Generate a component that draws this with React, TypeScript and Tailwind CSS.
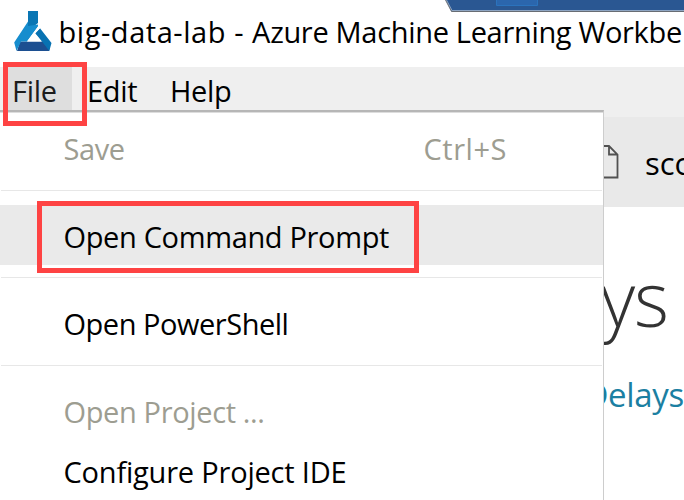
import type { ReactNode } from 'react';

function Logo() {
  return (
    <svg className="ml-[14px] mt-[10px] h-[42px] w-[38px] shrink-0" viewBox="14 10 38 42">
      <path d="M28 11h10v12l-5 4-5-1z" fill="#0a76b4" />
      <path d="M20 41.500h26l4 5-1 4.500H17z" fill="#1c4f91" />
      <path d="M28 21.500V26l10-1.500v2L27 41.500h-6L16.500 51l-2.300-8.500z" fill="#168dce" />
      <path d="M35 33l5-4.800L51.500 43l-2.200 8-7.300-9.500z" fill="#0872b2" />
      <path d="M27 41.500L38 26.500l2 1.700-5 5.500 6.500 7.800z" fill="#fff" />
    </svg>
  );
}

function Row({ children, className = '' }: { children: ReactNode; className?: string }) {
  return <div className={`flex h-[60px] shrink-0 items-center pl-[63.500px] pt-1 leading-[40px] ${className}`}>{children}</div>;
}

function Separator({ className }: { className: string }) {
  return <div className={`mx-px h-px shrink-0 bg-[#e7e7e7] ${className}`} />;
}

export default function App() {
  return (
    <div className="relative flex h-[500px] w-[684px] flex-col overflow-hidden bg-white font-['Open_Sans','Noto_Sans',sans-serif] text-[29px] font-normal text-black">
      <header className="flex h-[67px] shrink-0 bg-white">
        <Logo />
        <h1 className="ml-[6.500px] mt-[12px] whitespace-nowrap text-[29px] leading-[40px] tracking-[-0.32px]">
          <span className="tracking-[0.55px]">big-data-lab - </span>
          Azure Machine Learning Workbe
        </h1>
      </header>
      <svg className="absolute left-[440px] top-0 h-3 w-[244px]" viewBox="0 0 244 12">
        <path d="M6 0H244V12H12z" fill="#2a5792" />
        <path d="M56.500 0V5.500H97.500V0" fill="#2b66ad" stroke="#2b73bd" />
        <path d="M6.500 0L12 10.500H244" fill="none" stroke="#8da5c3" />
        <path d="M5.500 0L11.500 11.500H244" fill="none" stroke="#686d74" />
      </svg>

      <nav className="flex h-[50px] shrink-0 bg-[#efefef] leading-[47px] tracking-[-0.3px]">
        <span className="ml-1 w-[68px] bg-[#dedede] pl-2 text-[#1c1c1c]">File</span>
        <span className="ml-[15px] w-[83px]">Edit</span>
        <span>Help</span>
      </nav>

      <main className="flex flex-1 flex-col items-end">
        <div className="flex h-[90px] w-full shrink-0 items-center justify-end bg-[#e9e9e9]">
          <svg className="h-[34px] w-7 shrink-0" viewBox="0 0 28 34" fill="none" stroke="#515151" strokeWidth="1.800">
            <path d="M1 1H18L26.500 9.500V32.500H1zM18 1V9.500H26.500" />
          </svg>
          <span className="ml-[26px] mt-[2px] w-[39px] shrink-0 whitespace-nowrap text-[31px] leading-[44px]">sco</span>
        </div>
        <h2 className="mr-[16px] mt-[46px] whitespace-nowrap text-[75px] font-light leading-[90px] tracking-[-1px] text-[#333]">
          Delays
        </h2>
        <span className="mt-[29px] text-[33px] leading-[46px] tracking-[-0.3px] text-[#1b7fa2]">Delays</span>
      </main>

      <div className="absolute left-0 top-[110px] flex h-[390px] w-[604px] flex-col border-r border-t-2 border-r-[#cdcdcd] border-t-[#b6b6b6] bg-white pt-[5px] shadow-[inset_0_1px_0_#dddddd]">
        <Row className="text-[#9d9d91]">
          <span className="w-[360px] tracking-[-0.4px]">Save</span>
          <span className="tracking-[0.55px]">Ctrl+S</span>
        </Row>
        <Separator className="mb-[14px] mt-[13px]" />
        <Row className="bg-[#eaeaea] tracking-[-0.35px]">Open Command Prompt</Row>
        <Separator className="mb-[14px] mt-[12px]" />
        <Row className="tracking-[-0.47px]">Open PowerShell</Row>
        <Separator className="mb-[14px] mt-[13px]" />
        <Row className="text-[#9d9d91] tracking-[-0.36px]">Open Project ...</Row>
        <Row className="tracking-[-0.2px]">Configure Project IDE</Row>
      </div>

      <div className="pointer-events-none absolute left-[3px] top-[62px] h-16 w-[84px] border-5 border-[#fe4343]" />
      <div className="pointer-events-none absolute left-[37px] top-[201px] h-[72px] w-[382px] border-5 border-[#fe4343]" />
    </div>
  );
}
